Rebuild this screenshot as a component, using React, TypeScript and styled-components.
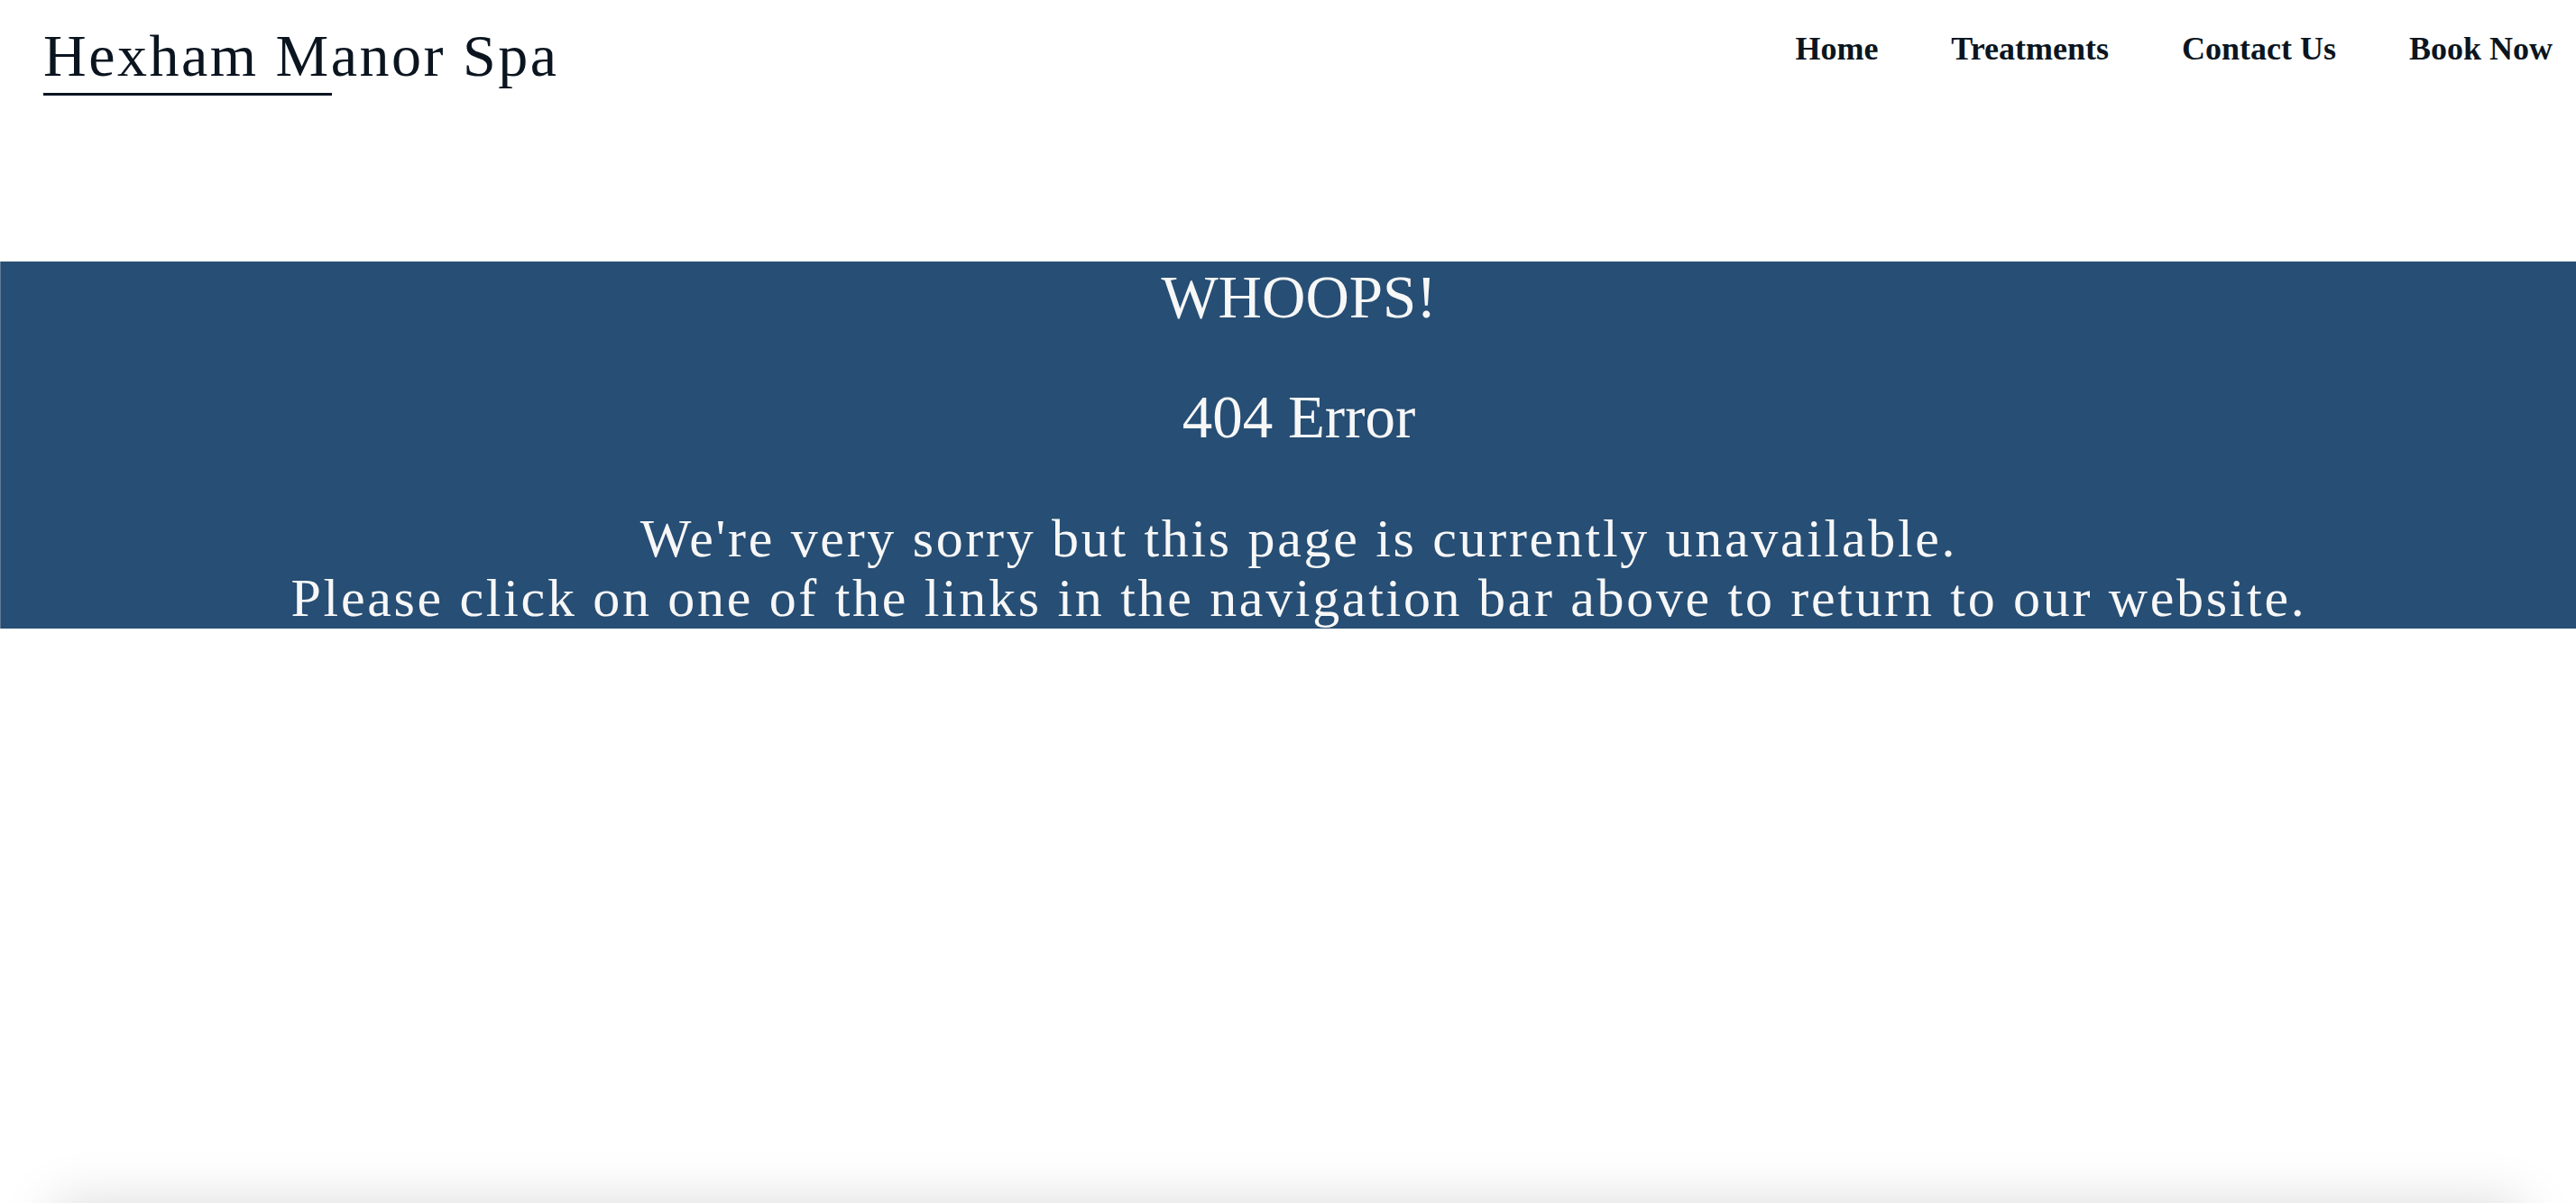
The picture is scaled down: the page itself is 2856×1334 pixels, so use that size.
import React from 'react';
import styled, { createGlobalStyle } from 'styled-components';

const navLinks = ['Home', 'Treatments', 'Contact Us', 'Book Now'];

const App = () => {
  return (
    <>
      <GlobalStyle />
      <Page>
        <Header>
          <Brand>
            <BrandName>Hexham Manor Spa</BrandName>
            <BrandRule />
          </Brand>
          <Nav>
            {navLinks.map((link) => (
              <NavLink key={link} href="#">
                {link}
              </NavLink>
            ))}
          </Nav>
        </Header>
        <ErrorBanner>
          <Title>WHOOPS!</Title>
          <Subtitle>404 Error</Subtitle>
          <Message>
            We're very sorry but this page is currently unavailable.
            <br />
            Please click on one of the links in the navigation bar above to return to our website.
          </Message>
        </ErrorBanner>
        <Main />
        <Footer />
      </Page>
    </>
  );
};

export default App;

const GlobalStyle = createGlobalStyle`
  html, body {
    margin: 0;
    padding: 0;
    background: #ffffff;
  }
  body {
    font-family: "Liberation Serif", "Times New Roman", serif;
  }
`;

const Page = styled.div`
  display: flex;
  flex-direction: column;
  height: 100vh;
  overflow: hidden;
  background: #ffffff;
`;

const Header = styled.header`
  display: flex;
  justify-content: space-between;
  align-items: flex-start;
  height: 290px;
  box-sizing: border-box;
  padding: 29px 26px 0 48px;
  flex-shrink: 0;
`;

const Brand = styled.div`
  display: flex;
  flex-direction: column;
`;

const BrandName = styled.span`
  font-family: "Liberation Serif", "Times New Roman", serif;
  font-size: 66px;
  line-height: 66px;
  letter-spacing: 2.5px;
  color: #0b1520;
  white-space: nowrap;
`;

const BrandRule = styled.div`
  width: 320px;
  height: 3px;
  margin-top: 8px;
  background: #0b1520;
`;

const Nav = styled.nav`
  display: flex;
  gap: 81px;
  margin-top: 7px;
`;

const NavLink = styled.a`
  font-family: "Liberation Serif", "Times New Roman", serif;
  font-size: 36px;
  line-height: 36px;
  font-weight: 700;
  color: #0b1520;
  text-decoration: none;
  white-space: nowrap;
`;

const ErrorBanner = styled.section`
  flex-shrink: 0;
  background: #274e74;
  border-left: 1px solid #5f7a96;
  padding: 6px 0 0 23px;
  color: #f7f7f7;
  text-align: center;
  font-family: "Liberation Serif", "Times New Roman", serif;
  font-size: 67px;
  line-height: 66.5px;
`;

const Title = styled.h1`
  margin: 0;
  font-size: inherit;
  font-weight: 400;
  line-height: inherit;
`;

const Subtitle = styled.h2`
  margin: 66.5px 0 0;
  font-size: inherit;
  font-weight: 400;
  line-height: inherit;
`;

const Message = styled.p`
  margin: 68px 0 0;
  font-size: 60px;
  line-height: 66.5px;
  letter-spacing: 2.68px;
  white-space: nowrap;
`;

const Main = styled.main`
  flex: 1;
`;

const Footer = styled.footer`
  flex-shrink: 0;
  height: 120px;
  margin: 0 60px -120px;
  background: #ffffff;
  box-shadow: 0 0 60px rgba(0, 0, 0, 0.15);
`;
